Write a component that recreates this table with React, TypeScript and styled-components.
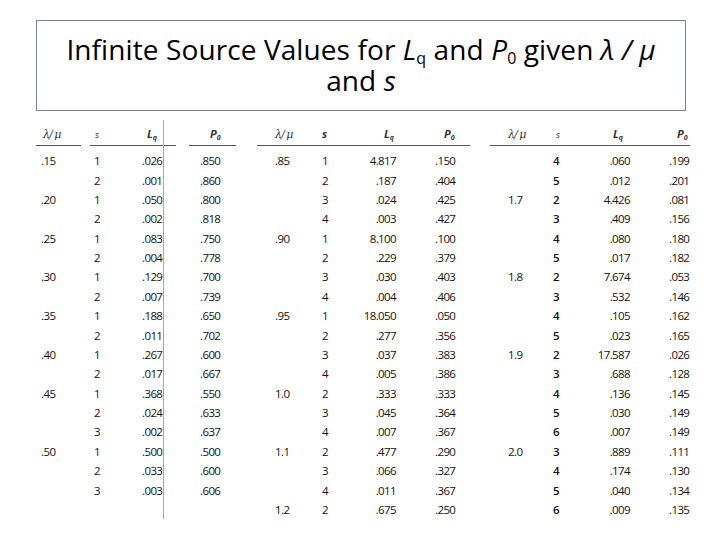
import styled, { createGlobalStyle } from 'styled-components'

const ROW_H = 19.39

type Row = [string, string, string, string]

interface BlockSpec {
  left: number
  cols: string
  header: number[]
  rules: [number, number][]
  lqAlign: 'left' | 'right'
  boldS?: boolean
  rows: Row[]
}

const leftRows: Row[] = [
  ['.15', '1', '.026', '.850'],
  ['', '2', '.001', '.860'],
  ['.20', '1', '.050', '.800'],
  ['', '2', '.002', '.818'],
  ['.25', '1', '.083', '.750'],
  ['', '2', '.004', '.778'],
  ['.30', '1', '.129', '.700'],
  ['', '2', '.007', '.739'],
  ['.35', '1', '.188', '.650'],
  ['', '2', '.011', '.702'],
  ['.40', '1', '.267', '.600'],
  ['', '2', '.017', '.667'],
  ['.45', '1', '.368', '.550'],
  ['', '2', '.024', '.633'],
  ['', '3', '.002', '.637'],
  ['.50', '1', '.500', '.500'],
  ['', '2', '.033', '.600'],
  ['', '3', '.003', '.606'],
]

const midRows: Row[] = [
  ['.85', '1', '4.817', '.150'],
  ['', '2', '.187', '.404'],
  ['', '3', '.024', '.425'],
  ['', '4', '.003', '.427'],
  ['.90', '1', '8.100', '.100'],
  ['', '2', '.229', '.379'],
  ['', '3', '.030', '.403'],
  ['', '4', '.004', '.406'],
  ['.95', '1', '18.050', '.050'],
  ['', '2', '.277', '.356'],
  ['', '3', '.037', '.383'],
  ['', '4', '.005', '.386'],
  ['1.0', '2', '.333', '.333'],
  ['', '3', '.045', '.364'],
  ['', '4', '.007', '.367'],
  ['1.1', '2', '.477', '.290'],
  ['', '3', '.066', '.327'],
  ['', '4', '.011', '.367'],
  ['1.2', '2', '.675', '.250'],
]

const rightRows: Row[] = [
  ['', '4', '.060', '.199'],
  ['', '5', '.012', '.201'],
  ['1.7', '2', '4.426', '.081'],
  ['', '3', '.409', '.156'],
  ['', '4', '.080', '.180'],
  ['', '5', '.017', '.182'],
  ['1.8', '2', '7.674', '.053'],
  ['', '3', '.532', '.146'],
  ['', '4', '.105', '.162'],
  ['', '5', '.023', '.165'],
  ['1.9', '2', '17.587', '.026'],
  ['', '3', '.688', '.128'],
  ['', '4', '.136', '.145'],
  ['', '5', '.030', '.149'],
  ['', '6', '.007', '.149'],
  ['2.0', '3', '.889', '.111'],
  ['', '4', '.174', '.130'],
  ['', '5', '.040', '.134'],
  ['', '6', '.009', '.135'],
]

const blocks: BlockSpec[] = [
  {
    left: 41,
    cols: '53px 48px 58px 50px',
    header: [2, 1, 5, 10],
    rules: [
      [36, 45],
      [90, 86],
      [189, 47],
    ],
    lqAlign: 'left',
    rows: leftRows,
  },
  {
    left: 275,
    cols: '47px 30px 44px 60px',
    header: [0, 0, 32, 48],
    rules: [[257, 213]],
    lqAlign: 'right',
    rows: midRows,
  },
  {
    left: 508,
    cols: '45px 32px 45px 60px',
    header: [0, 3, 28, 47],
    rules: [[490, 200]],
    lqAlign: 'right',
    boldS: true,
    rows: rightRows,
  },
]

const GlobalStyle = createGlobalStyle`
  html, body {
    margin: 0;
    padding: 0;
    background: #ffffff;
  }
  body {
    width: 720px;
    height: 540px;
    overflow: hidden;
  }
`

const App = () => {
  return (
    <Page>
      <GlobalStyle />
      <TitleBox>
        <TitleLine>
          Infinite Source Values for <Em>L</Em>
          <TitleSub>q</TitleSub> and <Em>P</Em>
          <TitleSub>0</TitleSub> given <Em>λ / μ</Em>
        </TitleLine>
        <TitleLine>
          and <Em>s</Em>
        </TitleLine>
      </TitleBox>
      <TableArea>
        {blocks.map((b, bi) => (
          <Block key={bi} style={{ left: b.left }}>
            <HeaderRow $cols={b.cols}>
              <HeadCell $shift={b.header[0]}>
                <HeadItalic>λ/ μ</HeadItalic>
              </HeadCell>
              <HeadCell $shift={b.header[1]}>
                <HeadS $bold={bi === 1}>s</HeadS>
              </HeadCell>
              <HeadCell $shift={b.header[2]}>
                <HeadBold>
                  L<HeadSub>q</HeadSub>
                </HeadBold>
              </HeadCell>
              <HeadCell $shift={b.header[3]}>
                <HeadBold>
                  P<HeadSub>0</HeadSub>
                </HeadBold>
              </HeadCell>
            </HeaderRow>
            <RuleRow>
              {b.rules.map(([x, w], ri) => (
                <Rule key={ri} style={{ left: x - b.left, width: w }} />
              ))}
            </RuleRow>
            <Body>
              {b.rows.map((r, ri) => (
                <DataRow key={ri} $cols={b.cols}>
                  <Cell>{r[0]}</Cell>
                  <Cell $bold={b.boldS}>{r[1]}</Cell>
                  <Cell $align={b.lqAlign}>{r[2]}</Cell>
                  <Cell $pad={b.lqAlign === 'right' ? 39 : 0}>{r[3]}</Cell>
                </DataRow>
              ))}
            </Body>
          </Block>
        ))}
        <ScanLine />
      </TableArea>
    </Page>
  )
}

const Page = styled.div`
  position: relative;
  width: 720px;
  height: 540px;
  padding-top: 20px;
  box-sizing: border-box;
  font-family: 'Open Sans', 'Liberation Sans', sans-serif;
  color: #111;
`

const TitleBox = styled.div`
  margin-left: 36px;
  width: 650px;
  height: 91px;
  box-sizing: border-box;
  border: 1px solid #74858f;
  display: flex;
  flex-direction: column;
  align-items: center;
  padding-top: 13px;
`

const TitleLine = styled.div`
  font-family: 'Open Sans', 'Liberation Sans', sans-serif;
  font-size: 28px;
  line-height: 31px;
  height: 31px;
  letter-spacing: 0.1px;
  color: #000;
  white-space: nowrap;
`

const Em = styled.i`
  font-style: italic;
`

const TitleSub = styled.sub`
  font-size: 16px;
  vertical-align: -4px;
  line-height: 16px;
`

const TableArea = styled.div`
  position: relative;
  height: 429px;
`

const Block = styled.div`
  position: absolute;
  top: 12px;
`

const HeaderRow = styled.div<{ $cols: string }>`
  display: grid;
  grid-template-columns: ${({ $cols }) => $cols};
  height: 20px;
  align-items: center;
  color: #333;
`

const HeadCell = styled.div<{ $shift: number }>`
  padding-left: ${({ $shift }) => $shift}px;
  font-size: 11px;
  white-space: nowrap;
`

const HeadItalic = styled.span`
  font-family: 'DejaVu Serif', 'Liberation Serif', serif;
  font-style: italic;
  font-size: 11px;
  letter-spacing: -1px;
`

const HeadS = styled.span<{ $bold?: boolean }>`
  font-style: italic;
  font-size: ${({ $bold }) => ($bold ? '11px' : '9px')};
  font-weight: ${({ $bold }) => ($bold ? 700 : 400)};
`

const HeadBold = styled.span`
  font-style: italic;
  font-weight: 700;
  font-size: 11px;
`

const HeadSub = styled.span`
  font-size: 7px;
  vertical-align: -2px;
  line-height: 0;
`

const RuleRow = styled.div`
  position: relative;
  height: 1px;
  margin-top: 2px;
  margin-bottom: 5px;
`

const Rule = styled.div`
  position: absolute;
  top: 0;
  height: 1px;
  background: #555;
`

const Body = styled.div`
  display: flex;
  flex-direction: column;
`

const DataRow = styled.div<{ $cols: string }>`
  display: grid;
  grid-template-columns: ${({ $cols }) => $cols};
  height: ${ROW_H}px;
  align-items: center;
`

const Cell = styled.div<{ $align?: 'left' | 'right'; $bold?: boolean; $pad?: number }>`
  font-size: 11.5px;
  letter-spacing: -0.6px;
  color: #111;
  text-align: ${({ $align }) => $align ?? 'left'};
  font-weight: ${({ $bold }) => ($bold ? 600 : 400)};
  padding-left: ${({ $pad }) => $pad ?? 0}px;
  white-space: nowrap;
`

const ScanLine = styled.div`
  position: absolute;
  left: 163px;
  top: 9px;
  width: 1px;
  height: 399px;
  background: #a8a8a8;
`

export default App
